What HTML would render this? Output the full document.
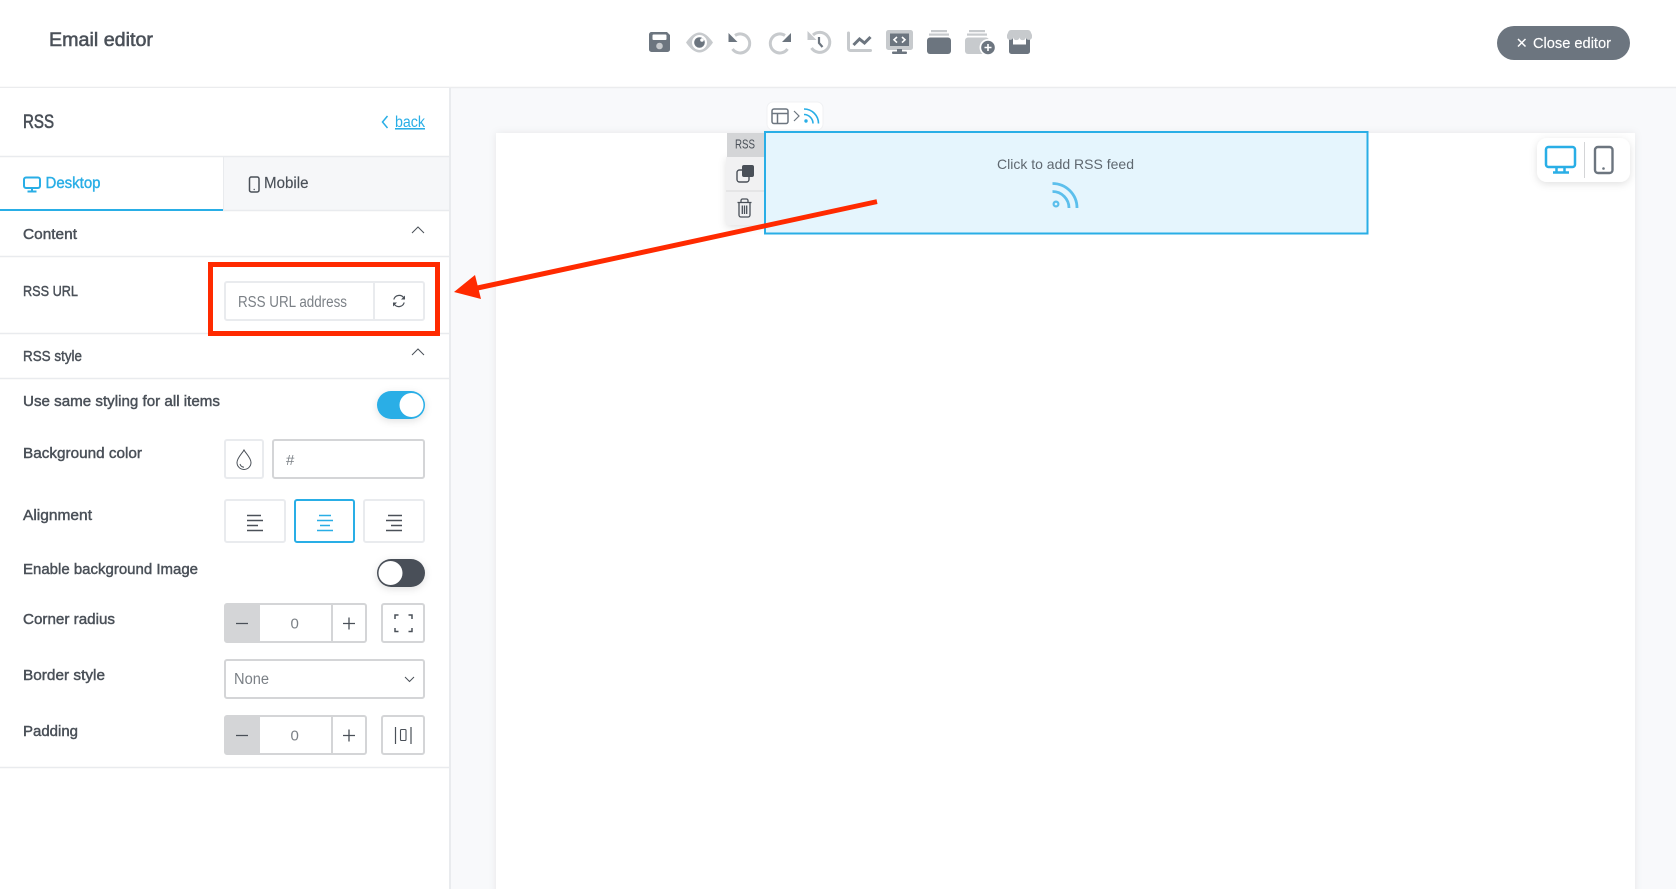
<!DOCTYPE html>
<html><head><meta charset="utf-8"><title>Email editor</title>
<style>
html,body{margin:0;padding:0;width:1676px;height:889px;overflow:hidden;background:#fff}
svg{display:block}
text{font-family:"Liberation Sans",sans-serif;fill:#4a5058;font-size:15px}
.l{stroke:#4a5058;stroke-width:.45px}
.g{fill:#7b8086}
.box{fill:#fff;stroke:#e9ebee;stroke-width:2}
.ln{stroke:#e9ebee;stroke-width:2}
.d{fill:#6c757f}.c{fill:#c7cacd}
.sd{stroke:#6c757f;fill:none}.sc{stroke:#c7cacd;fill:none}
.sb{stroke:#29aee6;fill:none}
.sk{stroke:#4a5058;fill:none}
</style></head><body>
<svg width="1676" height="889" viewBox="0 0 1676 889" xmlns="http://www.w3.org/2000/svg">
<defs>
<filter id="sh" x="-10%" y="-10%" width="120%" height="120%"><feDropShadow dx="0" dy="0" stdDeviation="4" flood-color="#000" flood-opacity=".07"/></filter>
<filter id="sh2" x="-30%" y="-30%" width="160%" height="160%"><feDropShadow dx="0" dy="2" stdDeviation="4" flood-color="#000" flood-opacity=".12"/></filter>
</defs>
<rect width="1676" height="889" fill="#fff"/>
<!-- canvas area -->
<rect x="450" y="88" width="1226" height="801" fill="#f8f9fb"/>
<rect x="496" y="133" width="1139" height="780" fill="#fff" filter="url(#sh)"/>
<!-- header -->
<line x1="0" y1="87.5" x2="1676" y2="87.5" stroke="#ebecee" stroke-width="1.5"/>
<text x="49" y="46" class="l" style="font-size:19px;stroke-width:.55px" textLength="104" lengthAdjust="spacingAndGlyphs">Email editor</text>

<!-- save -->
<path class="d" d="M652 32h15l3 3v14.500a2.500 2.500 0 0 1-2.500 2.500h-16a2.500 2.500 0 0 1-2.500-2.500v-15a2.500 2.500 0 0 1 2.500-2.500z"/>
<rect x="652.500" y="34.500" width="14" height="5.500" rx="1" fill="#fff"/>
<circle cx="659.500" cy="46" r="3.300" fill="#c7cacd"/>
<!-- eye -->
<path class="c" d="M686 42.500C691 35.500 695 32.500 699.500 32.500S708 35.500 713 42.500C708 49.500 704 52.500 699.500 52.500S691 49.500 686 42.500z"/>
<circle cx="699.500" cy="42.500" r="7.500" fill="#fff"/>
<circle cx="699.500" cy="42.500" r="5.300" fill="#6c757f"/>
<circle cx="702" cy="40" r="1.800" fill="#fff"/>
<!-- undo -->
<path class="sc" stroke-width="3" d="M735 35.500A9.500 9.500 0 1 1 732.500 49"/>
<path class="d" d="M728.500 33l9 9h-9z"/>
<!-- redo -->
<path class="sc" stroke-width="3" d="M785 35.500A9.500 9.500 0 1 0 787.500 49"/>
<path class="d" d="M791 33v9h-9z"/>
<!-- history -->
<path class="sc" stroke-width="3" d="M813 35A10 10 0 1 1 811.500 48"/>
<path class="c" d="M807.500 31l9 9h-9z"/>
<path class="sd" stroke-width="2.200" d="M819 37v6l3.500 4"/>
<!-- chart -->
<path class="sc" stroke-width="3" stroke-linecap="round" d="M848.500 33v15.500a2 2 0 0 0 2 2h20"/>
<path class="sd" stroke-width="3" d="M853.500 45l6-6 5 4 6-6"/>
<!-- monitor -->
<rect x="886" y="30" width="27" height="20" rx="2.500" fill="#c7cacd"/>
<rect x="890" y="33.500" width="19" height="12.500" fill="#6c757f"/>
<path d="M897 37l-3 2.800 3 2.800M902 37l3 2.800-3 2.800" fill="none" stroke="#fff" stroke-width="1.600"/>
<rect x="897" y="49" width="5" height="4" fill="#6c757f"/>
<rect x="892" y="51.500" width="15" height="2.500" rx="1" fill="#6c757f"/>
<!-- stack -->
<rect x="931" y="30" width="16" height="2.200" fill="#c7cacd"/>
<rect x="929" y="33.500" width="20" height="2.200" fill="#c7cacd"/>
<rect x="927" y="37.500" width="24" height="16.500" rx="3" fill="#6c757f"/>
<!-- stack plus -->
<rect x="969" y="30" width="16" height="2.200" fill="#c7cacd"/>
<rect x="967" y="33.500" width="20" height="2.200" fill="#c7cacd"/>
<rect x="965" y="37.500" width="24" height="16.500" rx="3" fill="#c7cacd"/>
<circle cx="988" cy="47.500" r="8.500" fill="#fff"/>
<circle cx="988" cy="47.500" r="6.800" fill="#6c757f"/>
<path d="M984.500 47.500h7M988 44v7" stroke="#fff" stroke-width="1.600"/>
<!-- store -->
<path class="d" d="M1009 38h21v13.500a2.500 2.500 0 0 1-2.500 2.500h-16a2.500 2.500 0 0 1-2.500-2.500z"/>
<rect x="1013" y="38" width="13" height="6.500" fill="#fff"/>
<path class="c" d="M1011 30h17a3 3 0 0 1 2.500 1.500l1.500 3.500v2.500a3.200 3.200 0 0 1-6.200 0 3.200 3.200 0 0 1-6.300 0 3.200 3.200 0 0 1-6.300 0 3.200 3.200 0 0 1-6.200 0V35l1.500-3.500a3 3 0 0 1 2.500-1.500z"/>

<!-- close -->
<rect x="1497" y="26" width="133" height="34" rx="17" fill="#6c757f"/>
<path d="M1518 39l7.500 7.500M1525.500 39l-7.500 7.500" stroke="#fff" stroke-width="1.500"/>
<text x="1533" y="48" style="fill:#fff;font-size:15px" stroke="#fff" stroke-width=".15" textLength="78" lengthAdjust="spacingAndGlyphs">Close editor</text>

<!-- left panel -->
<rect x="0" y="88" width="449" height="801" fill="#fff"/>
<rect x="449" y="88" width="2" height="801" fill="#e9ebee"/>
<text x="23" y="128" class="l" style="font-size:19px;stroke-width:.6px" textLength="31" lengthAdjust="spacingAndGlyphs">RSS</text>
<path class="sb" stroke-width="1.500" d="M387.500 116l-5 6 5 6"/>
<text x="395" y="127" style="fill:#29aee6;font-size:15.500px;text-decoration:underline" textLength="30" lengthAdjust="spacingAndGlyphs">back</text>

<rect x="223" y="156" width="226" height="54" fill="#f6f7f9"/>
<line x1="0" y1="156.500" x2="449" y2="156.500" stroke="#e9ebee" stroke-width="1.500"/>
<line x1="223.500" y1="156" x2="223.500" y2="210" stroke="#e9ebee" stroke-width="1"/>
<line x1="223" y1="210.500" x2="449" y2="210.500" stroke="#e9ebee" stroke-width="1.500"/>
<rect x="0" y="209" width="223" height="2" fill="#29aee6"/>
<rect x="24" y="177.500" width="16" height="10.500" rx="2" class="sb" stroke-width="2"/>
<path class="sb" stroke-width="2" d="M32 188.500v2.500M27.500 191.500h9"/>
<text x="45.500" y="188" style="fill:#29aee6;font-size:15.500px" stroke="#29aee6" stroke-width=".4" textLength="55" lengthAdjust="spacingAndGlyphs">Desktop</text>
<rect x="249.500" y="177" width="9.500" height="15" rx="1.800" class="sk" stroke-width="1.500"/>
<circle cx="254.200" cy="189.500" r=".7" fill="#4a5058"/>
<text x="264" y="188" style="font-size:15.500px" stroke="#4a5058" stroke-width=".15" textLength="44.500" lengthAdjust="spacingAndGlyphs">Mobile</text>

<text x="23" y="239" class="l" textLength="54" lengthAdjust="spacingAndGlyphs">Content</text>
<path class="sk" stroke-width="1" d="M412 233l6-6 6 6"/>
<line x1="0" y1="256.500" x2="449" y2="256.500" stroke="#e9ebee" stroke-width="1.500"/>
<text x="23" y="296" class="l" textLength="55" lengthAdjust="spacingAndGlyphs">RSS URL</text>

<rect x="225" y="282" width="199" height="38" rx="2" class="box"/>
<line x1="374" y1="282" x2="374" y2="320" class="ln"/>
<text x="238" y="307" class="g" textLength="109" lengthAdjust="spacingAndGlyphs" style="font-size:15.500px">RSS URL address</text>
<!-- refresh -->
<path class="sk" stroke-width="1.200" d="M393.800 299.500a5.600 5.600 0 0 1 9.900-1.800l1 1.300M404.200 302.500a5.600 5.600 0 0 1-9.900 1.800l-1-1.300"/>
<path d="M405 295.500v4h-4zM393 306.500v-4h4z" fill="#4a5058"/>

<line x1="0" y1="333.500" x2="449" y2="333.500" stroke="#e9ebee" stroke-width="1.500"/>
<text x="23" y="361" class="l" textLength="59" lengthAdjust="spacingAndGlyphs">RSS style</text>
<path class="sk" stroke-width="1" d="M412 355l6-6 6 6"/>
<line x1="0" y1="378.500" x2="449" y2="378.500" stroke="#e9ebee" stroke-width="1.500"/>

<text x="23" y="406" class="l" textLength="197" lengthAdjust="spacingAndGlyphs">Use same styling for all items</text>
<rect x="377" y="391" width="48" height="28" rx="14" fill="#29aee6" filter="url(#sh2)"/>
<circle cx="411.500" cy="405" r="12" fill="#fff"/>

<text x="23" y="458" class="l" textLength="119" lengthAdjust="spacingAndGlyphs">Background color</text>
<rect x="225" y="440" width="38" height="38" rx="2" class="box"/>
<path class="sk" stroke-width="1" d="M244 450c-1.500 3-7 8-7 12.500a7 7 0 0 0 14 0c0-4.500-5.500-9.500-7-12.500z"/>
<path class="sk" stroke-width="1" d="M240 464c.5 1.800 2 3 4 3.200"/>
<rect x="273" y="440" width="151" height="38" rx="2" fill="#fff" stroke="#d4d5d7" stroke-width="2"/>
<text x="286" y="465" class="g" style="font-size:15px">#</text>

<text x="23" y="520" class="l" textLength="69" lengthAdjust="spacingAndGlyphs">Alignment</text>
<rect x="225" y="500" width="60" height="42" rx="2" class="box"/>
<rect x="295" y="500" width="59" height="42" rx="2" fill="#fff" stroke="#29aee6" stroke-width="2"/>
<rect x="364" y="500" width="60" height="42" rx="2" class="box"/>
<path class="sk" stroke-width="1.500" d="M247 515.500h14M247 520.500h16M247 525.500h11M247 530.500h16"/>
<path class="sb" stroke-width="1.500" d="M319 515.500h12M317 520.500h16M320 525.500h10M317 530.500h16"/>
<path class="sk" stroke-width="1.500" d="M388 515.500h14M386 520.500h16M391 525.500h11M386 530.500h16"/>

<text x="23" y="574" class="l" textLength="175" lengthAdjust="spacingAndGlyphs">Enable background Image</text>
<rect x="377" y="559" width="48" height="28" rx="14" fill="#4a5058" filter="url(#sh2)"/>
<circle cx="390.500" cy="573" r="12" fill="#fff"/>

<text x="23" y="624" class="l" textLength="92" lengthAdjust="spacingAndGlyphs">Corner radius</text>
<rect x="225" y="604" width="141" height="38" rx="2" fill="#fff" stroke="#d4d5d7" stroke-width="2"/>
<path d="M226 604h34v38h-34z" fill="#d4d5d7"/>
<line x1="332" y1="604" x2="332" y2="642" stroke="#d4d5d7" stroke-width="2"/>
<path class="sk" stroke-width="1.300" d="M236 623.500h12M343 623.500h12M349 617.500v12"/>
<text x="290.500" y="628.500" class="g">0</text>
<rect x="382" y="604" width="42" height="38" rx="2" fill="#fff" stroke="#d4d5d7" stroke-width="2"/>
<path class="sk" stroke-width="1.500" d="M395 619v-4h3.500M408.500 615h3.500v4M412 628v3.500h-3.500M398.500 631.500H395V628"/>

<text x="23" y="680" class="l" textLength="82" lengthAdjust="spacingAndGlyphs">Border style</text>
<rect x="225" y="660" width="199" height="38" rx="2" fill="#fff" stroke="#d4d5d7" stroke-width="2"/>
<text x="234" y="684" class="g" style="font-size:15.500px" textLength="35" lengthAdjust="spacingAndGlyphs">None</text>
<path class="sk" stroke-width="1" d="M405 677l4.500 4.500 4.500-4.500"/>

<text x="23" y="736" class="l" textLength="55" lengthAdjust="spacingAndGlyphs">Padding</text>
<rect x="225" y="716" width="141" height="38" rx="2" fill="#fff" stroke="#d4d5d7" stroke-width="2"/>
<path d="M226 716h34v38h-34z" fill="#d4d5d7"/>
<line x1="332" y1="716" x2="332" y2="754" stroke="#d4d5d7" stroke-width="2"/>
<path class="sk" stroke-width="1.300" d="M236 735.500h12M343 735.500h12M349 729.500v12"/>
<text x="290.500" y="740.500" class="g">0</text>
<rect x="382" y="716" width="42" height="38" rx="2" fill="#fff" stroke="#d4d5d7" stroke-width="2"/>
<path class="sk" stroke-width="1.200" d="M395.500 727v17M411 727v17"/>
<rect x="400.500" y="729.500" width="5.500" height="11" rx="1" class="sk" stroke-width="1.100"/>
<line x1="0" y1="767.500" x2="449" y2="767.500" stroke="#e9ebee" stroke-width="1.500"/>

<!-- breadcrumb -->
<rect x="767" y="102" width="56" height="28" rx="6" fill="#fff" stroke="#f0f1f3"/>
<rect x="772" y="109" width="16" height="14.500" rx="2" class="sd" stroke-width="1.500"/>
<path class="sd" stroke-width="1.500" d="M772 113.500h16M777.500 113.500v10"/>
<path class="sd" stroke-width="1.200" d="M794 111l5 5-5 5"/>
<path class="sb" stroke-width="1.600" d="M804 109a14.500 14.500 0 0 1 14.500 14.500M804 114.500a9 9 0 0 1 9 9"/>
<circle cx="806" cy="121" r="1.700" fill="#29aee6"/>

<!-- toolbar -->
<rect x="726" y="157" width="38" height="68" fill="#f1f1f2" filter="url(#sh2)"/>
<rect x="727" y="133" width="37" height="24" fill="#d4d5d7"/>
<text x="735" y="148.500" style="font-size:13px" textLength="20" lengthAdjust="spacingAndGlyphs">RSS</text>
<line x1="726" y1="191" x2="764" y2="191" stroke="#d9d9db" stroke-width="1"/>
<rect x="737" y="170" width="12" height="12" rx="2.500" class="sk" stroke-width="1.400"/>
<rect x="742" y="165" width="12" height="12" rx="2" fill="#4a5058"/>
<path class="sk" stroke-width="1.300" d="M737.500 202.500h14M741 202v-1.500a1.500 1.500 0 0 1 1.500-1.500h4a1.500 1.500 0 0 1 1.500 1.500v1.500M739 203v12a2 2 0 0 0 2 2h7a2 2 0 0 0 2-2v-12M742.300 205.500v8.500M744.500 205.500v8.500M746.700 205.500v8.500"/>

<!-- selected block -->
<rect x="765" y="132" width="602.500" height="101.500" fill="#e5f5fd" stroke="#29aee6" stroke-width="2"/>
<text x="997" y="169" style="font-size:14px;fill:#5f6870" textLength="137" lengthAdjust="spacingAndGlyphs">Click to add RSS feed</text>
<path fill="none" stroke="#5cbfec" stroke-width="2.800" d="M1052.500 183.500a24.500 24.500 0 0 1 24.500 24.500M1052.500 191.500a16.500 16.500 0 0 1 16.500 16.500"/>
<circle cx="1056" cy="204" r="2.400" fill="none" stroke="#5cbfec" stroke-width="2.200"/>

<!-- device toggle -->
<rect x="1537" y="138" width="93" height="44" rx="10" fill="#fff" filter="url(#sh2)"/>
<rect x="1546" y="147" width="29" height="20" rx="2.500" class="sb" stroke-width="2.500"/>
<path class="sb" stroke-width="2.500" d="M1556.500 168v4M1564.500 168v4M1553 172.500h16"/>
<line x1="1584.500" y1="142" x2="1584.500" y2="178" stroke="#d4d5d7" stroke-width="1"/>
<rect x="1595" y="147" width="17.500" height="26" rx="3" class="sd" stroke-width="2.400"/>
<circle cx="1603.500" cy="168.500" r="1.300" fill="#6c757f"/>

<!-- red annotations -->
<rect x="210.500" y="264.500" width="227" height="69" fill="none" stroke="#ff2a00" stroke-width="5"/>
<path d="M876.500 199.300L477 285.500l1 5L877.500 204z" fill="#ff2a00"/>
<path d="M454 292L475 275 481 299z" fill="#ff2a00"/>
</svg>
</body></html>
